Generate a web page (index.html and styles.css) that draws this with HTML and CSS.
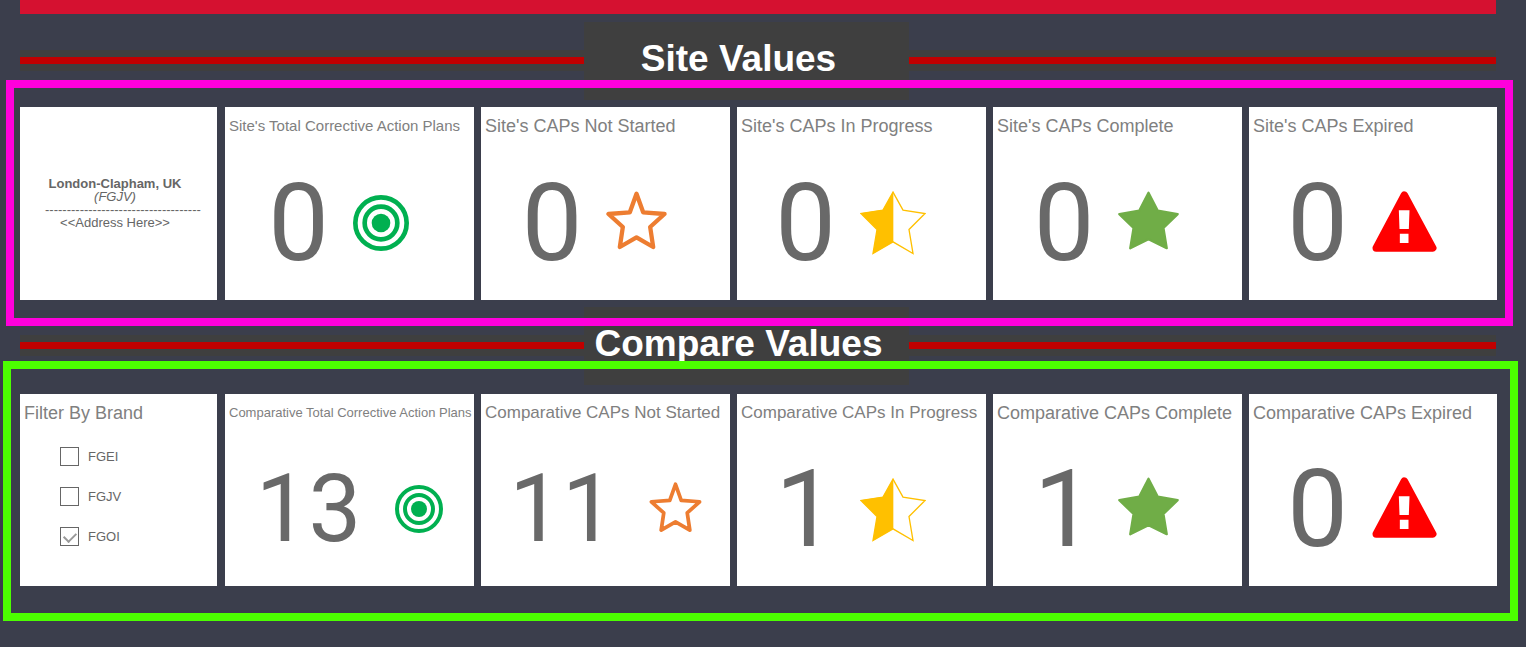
FILE: index.html
```
<!DOCTYPE html>
<html lang="en">
<head>
    <meta charset="UTF-8">
    <meta name="viewport" content="width=device-width, initial-scale=1.0">
    <title>Corrective Action Plans</title>
    <link rel="stylesheet" href="styles.css">
</head>

<body>
    <!-- Icons shared by both rows -->
    <svg class="sprite" aria-hidden="true">
        <symbol id="target" viewBox="-84 -84 168 168">
            <circle r="77" fill="none" stroke="#00b050" stroke-width="14"/>
            <circle r="49" fill="none" stroke="#00b050" stroke-width="14"/>
            <circle r="28" fill="#00b050"/>
        </symbol>
        <symbol id="star-outline" viewBox="22 33 182 192">
            <path d="M113 41 L133 97 L197 102 L154 141 L163 201 L113 172 L63 201 L72 141 L29 102 L93 97 Z" fill="none" stroke="#ed7d31" stroke-width="13" stroke-linejoin="round"/>
        </symbol>
        <symbol id="star-half" viewBox="15 30 198 194">
            <path d="M114 36 L144 90 L210 100 L162 148 L174 220 L114 185 L54 220 L66 148 L18 100 L84 90 Z" fill="none" stroke="#ffc000" stroke-width="4"/>
            <path d="M115 34 V185 L54 221 L66 148 L17 99 L84 89 Z" fill="#ffc000"/>
        </symbol>
        <symbol id="star-full" viewBox="24 32 184 192">
            <path d="M116 37 L144 91 L204 101 L161 143 L171 204 L116 177 L61 204 L71 143 L28 101 L88 91 Z" fill="#70ad47" stroke="#70ad47" stroke-width="7" stroke-linejoin="round"/>
        </symbol>
        <symbol id="warning" viewBox="23 29 194 192">
            <path d="M119.500 41 L205 200 L35 200 Z" fill="#ff0000" stroke="#ff0000" stroke-width="22" stroke-linejoin="round"/>
            <path d="M103 87 H135 L133 143 H105 Z M106 157 H132 V185 H106 Z" fill="#ffffff"/>
        </symbol>
    </svg>

    <header class="top-bar"></header>

    <main>
        <!-- Site values -->
        <div class="section-heading">
            <span class="rule"></span>
            <h1>Site Values</h1>
            <span class="rule"></span>
        </div>

        <section class="frame frame-site">
            <article class="card card-address">
                <div class="address">
                    <strong>London-Clapham, UK</strong>
                    <em>(FGJV)</em>
                    <span>------------------------------------</span>
                    <span>&lt;&lt;Address Here&gt;&gt;</span>
                </div>
            </article>
            <article class="card">
                <h2 class="title-md">Site's Total Corrective Action Plans</h2>
                <div class="stat">
                    <span>0</span>
                    <svg class="icon icon-target"><use href="#target"/></svg>
                </div>
            </article>
            <article class="card">
                <h2>Site's CAPs Not Started</h2>
                <div class="stat">
                    <span>0</span>
                    <svg class="icon icon-star"><use href="#star-outline"/></svg>
                </div>
            </article>
            <article class="card">
                <h2>Site's CAPs In Progress</h2>
                <div class="stat">
                    <span>0</span>
                    <svg class="icon icon-half"><use href="#star-half"/></svg>
                </div>
            </article>
            <article class="card">
                <h2>Site's CAPs Complete</h2>
                <div class="stat">
                    <span>0</span>
                    <svg class="icon icon-star"><use href="#star-full"/></svg>
                </div>
            </article>
            <article class="card">
                <h2>Site's CAPs Expired</h2>
                <div class="stat">
                    <span>0</span>
                    <svg class="icon icon-warning"><use href="#warning"/></svg>
                </div>
            </article>
        </section>

        <!-- Compare values -->
        <div class="section-heading heading-compare">
            <span class="rule"></span>
            <h1>Compare Values</h1>
            <span class="rule"></span>
        </div>

        <section class="frame frame-compare">
            <article class="card">
                <h2>Filter By Brand</h2>
                <div class="filters">
                    <label><input type="checkbox" name="brand" value="FGEI">FGEI</label>
                    <label><input type="checkbox" name="brand" value="FGJV">FGJV</label>
                    <label><input type="checkbox" name="brand" value="FGOI" checked>FGOI</label>
                </div>
            </article>
            <article class="card">
                <h2 class="title-sm">Comparative Total Corrective Action Plans</h2>
                <div class="stat stat-wide">
                    <span>13</span>
                    <svg class="icon icon-target"><use href="#target"/></svg>
                </div>
            </article>
            <article class="card">
                <h2 class="title-lg">Comparative CAPs Not Started</h2>
                <div class="stat stat-wide">
                    <span>11</span>
                    <svg class="icon icon-star"><use href="#star-outline"/></svg>
                </div>
            </article>
            <article class="card">
                <h2 class="title-lg">Comparative CAPs In Progress</h2>
                <div class="stat">
                    <span>1</span>
                    <svg class="icon icon-half"><use href="#star-half"/></svg>
                </div>
            </article>
            <article class="card">
                <h2>Comparative CAPs Complete</h2>
                <div class="stat">
                    <span>1</span>
                    <svg class="icon icon-star"><use href="#star-full"/></svg>
                </div>
            </article>
            <article class="card">
                <h2>Comparative CAPs Expired</h2>
                <div class="stat">
                    <span>0</span>
                    <svg class="icon icon-warning"><use href="#warning"/></svg>
                </div>
            </article>
        </section>
    </main>
</body>
</html>
```

FILE: styles.css
```
/* Reset */
* {
    margin: 0;
    padding: 0;
    box-sizing: border-box;
}

body {
    font-family: "Liberation Sans", Arial, sans-serif;
    font-size: 13px;
    background-color: #3b3e4c;
    color: #666666;
}

.sprite {
    display: none;
}

.top-bar {
    height: 14px;
    margin: 0 30px 8px 20px;
    background-color: #d51130;
}

/* Section headings */
.section-heading {
    display: grid;
    grid-template-columns: 564fr 325fr 587fr;
    align-items: center;
    margin: 0 30px 0 20px;
}

.heading-compare {
    margin-top: -19px;
}

.section-heading h1 {
    padding: 16px 16px 20px 0;
    background-color: #3f3f3f;
    color: #ffffff;
    font-size: 37px;
    line-height: 42px;
    text-align: center;
    white-space: nowrap;
}

.rule {
    height: 21px;
    margin-bottom: 1px;
    border: solid #3f3f3f;
    border-width: 7px 0;
    background-color: #c00000;
}

/* Coloured frames, drawn over the headings */
.frame {
    position: relative;
    z-index: 1;
    display: grid;
    grid-template-columns: 198fr repeat(4, 249fr) 248fr;
    gap: 7px;
}

.frame-site {
    margin: -20px 13px 0 6px;
    padding: 19px 8px 18px 6px;
    border: 8px solid #ff00dc;
}

.frame-compare {
    margin: -24px 8px 0 3px;
    padding: 25px 13px 27px 9px;
    border: 8px solid #4cff00;
}

/* Cards */
.card {
    display: flex;
    flex-direction: column;
    min-width: 0;
    min-height: 192px;
    background-color: #ffffff;
}

.card:first-child {
    margin-right: 1px;
}

.frame-site .card {
    min-height: 193px;
}

.card h2 {
    padding-left: 4px;
    color: #808080;
    font-size: 18px;
    font-weight: normal;
    line-height: 38px;
    white-space: nowrap;
}

.card .title-lg {
    font-size: 17px;
}

.card .title-md {
    font-size: 15px;
}

.card .title-sm {
    font-size: 13px;
}

.stat {
    flex: 1;
    display: flex;
    align-items: center;
    justify-content: center;
    gap: 24px;
    padding-right: 22px;
    color: #696969;
    font-family: Roboto, Arial, sans-serif;
    font-size: 108px;
    line-height: 1;
}

.stat-wide {
    gap: 34px;
    padding-right: 0;
    font-size: 94px;
}

.icon {
    flex: none;
}

.icon-target {
    width: 56px;
    height: 56px;
}

.icon-star {
    width: 61px;
    height: 64px;
}

.icon-half {
    width: 66px;
    height: 65px;
}

.icon-warning {
    width: 65px;
    height: 64px;
}

.stat-wide .icon-target {
    width: 48px;
    height: 48px;
}

.stat-wide .icon-star {
    width: 53px;
    height: 55px;
}

/* Address card */
.card-address {
    justify-content: center;
    padding: 0 0 2px 25px;
}

.address {
    display: flex;
    flex-direction: column;
    width: 140px;
    line-height: 13px;
    text-align: center;
    white-space: nowrap;
}

/* Brand filter */
.filters {
    display: flex;
    flex-direction: column;
    gap: 21px;
    padding: 15px 0 0 40px;
}

.filters label {
    display: flex;
    align-items: center;
    gap: 9px;
    line-height: 19px;
}

.filters input {
    appearance: none;
    display: grid;
    justify-content: center;
    width: 19px;
    height: 19px;
    border: 1px solid #666666;
    background-color: #ffffff;
}

.filters input:checked::before {
    content: "";
    width: 6px;
    height: 10px;
    margin-top: 2px;
    border: solid #999999;
    border-width: 0 2px 2px 0;
    transform: rotate(45deg);
}
```
